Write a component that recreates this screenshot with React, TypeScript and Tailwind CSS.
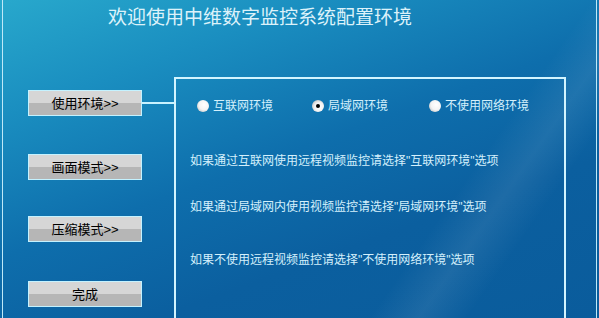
import React from "react";

const font = { fontFamily: '"Liberation Sans", "Noto Sans CJK SC", sans-serif' };

function Btn({ label, className }: { label: string; className?: string }) {
  return (
    <div
      className={
        "w-[114px] h-[26px] border border-[#c4f2ff] bg-[linear-gradient(to_bottom,#d6d6d6_0%,#d6d6d6_50%,#b6b6b6_50%,#b6b6b6_100%)] flex items-center justify-center text-[13px] text-black leading-none " +
        (className ?? "")
      }
    >
      {label}
    </div>
  );
}

function Radio({ label, checked, className }: { label: string; checked?: boolean; className?: string }) {
  return (
    <div className={"flex items-center gap-[4px] " + (className ?? "")}>
      <div
        className={
          "w-[12px] h-[12px] rounded-full flex items-center justify-center " +
          (checked
            ? "bg-[radial-gradient(circle_at_60%_60%,#ffffff_0%,#f2f2f2_45%,#a8a8a8_100%)]"
            : "bg-[radial-gradient(circle_at_60%_40%,#ffffff_0%,#f4f4f4_50%,#b0b0b0_100%)]")
        }
      >
        {checked && <div className="w-[4px] h-[4px] rounded-full bg-black" />}
      </div>
      <span className="text-[12px] leading-[20px] text-[#d4f0fc]">{label}</span>
    </div>
  );
}

export default function App() {
  return (
    <div
      style={font}
      className="w-[599px] h-[318px] overflow-hidden px-[2px] bg-[linear-gradient(160deg,#28a8cc_0%,#1a8ec0_22%,#0e6eac_48%,#0b5f9f_70%,#0a5c9c_100%)] relative"
    >
      <div className="absolute inset-0 pointer-events-none bg-[linear-gradient(125deg,transparent_0%,transparent_72%,rgba(255,255,255,0.08)_78%,transparent_84%)]" />
      <div className="relative h-full border-x border-[#bfe9f8] flex flex-col">
        <div className="h-[77px] w-[514px] pt-[6px] text-center text-[19px] leading-[24px] text-[#dcf2fa]">
          欢迎使用中维数字监控系统配置环境
        </div>
        <div className="flex flex-1">
          <div className="w-[171px] flex flex-col pl-[25px]">
            <div className="flex items-center mt-[13px]">
              <Btn label="使用环境>>" />
              <div className="flex-1 h-[2px] bg-[#c8f2ff]" />
            </div>
            <Btn label="画面模式>>" className="mt-[38px]" />
            <Btn label="压缩模式>>" className="mt-[36px]" />
            <Btn label="完成" className="mt-[39px]" />
          </div>
          <div className="w-[392px] border-t-2 border-x-2 border-[#d2f4ff] flex flex-col">
            <div className="flex items-center h-[20px] mt-[17px] pl-[21px]">
              <Radio label="互联网环境" className="w-[115px]" />
              <Radio label="局域网环境" checked className="w-[117px]" />
              <Radio label="不使用网络环境" />
            </div>
            <div className="pl-[14px] text-[12px] leading-[20px] text-[#d4f0fc]">
              <div className="mt-[35px]">如果通过互联网使用远程视频监控请选择"互联网环境"选项</div>
              <div className="mt-[26px]">如果通过局域网内使用视频监控请选择"局域网环境"选项</div>
              <div className="mt-[33px]">如果不使用远程视频监控请选择"不使用网络环境"选项</div>
            </div>
          </div>
        </div>
      </div>
    </div>
  );
}
